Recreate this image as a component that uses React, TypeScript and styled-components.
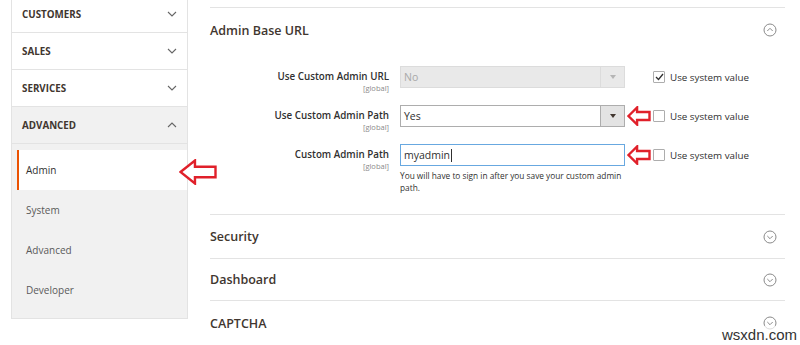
import React from "react";
import styled, { createGlobalStyle } from "styled-components";

const Global = createGlobalStyle`
  html, body { margin: 0; padding: 0; background: #fff; overflow: hidden; }
  body { font-family: "Open Sans", "Noto Sans", Arial, sans-serif; color: #303030; }
  * { box-sizing: border-box; }
`;

const Page = styled.div`
  position: relative;
  width: 800px;
  height: 345px;
  overflow: hidden;
  display: flex;
  align-items: flex-start;
  gap: 22px;
  padding-left: 11px;
`;

const Sidebar = styled.nav`
  position: relative;
  width: 177px;
  margin-top: -4px;
  border-left: 1px solid #e3e3e3;
  border-right: 1px solid #e3e3e3;
  border-bottom: 1px solid #e3e3e3;
  display: flex;
  flex-direction: column;
`;

const GroupHead = styled.div<{ $active?: boolean }>`
  height: 37px;
  display: flex;
  align-items: center;
  justify-content: space-between;
  padding: 0 10px 0 10px;
  border-bottom: 1px solid #e3e3e3;
  background: ${(p) => (p.$active ? "#f1f1f1" : "#fff")};
  font-size: 9.8px;
  font-weight: 700;
  color: #41362f;
`;

const SubList = styled.ul`
  list-style: none;
  margin: 0;
  padding: 6px 0 8px 0;
  background: #f1f1f1;
`;

const SubItem = styled.li<{ $active?: boolean }>`
  position: relative;
  height: 40px;
  display: flex;
  align-items: center;
  margin-left: 5px;
  padding-left: ${(p) => (p.$active ? "7px" : "9px")};
  font-size: 10px;
  color: ${(p) => (p.$active ? "#303030" : "#5a5a5a")};
  background: ${(p) => (p.$active ? "#fff" : "transparent")};
  border-left: ${(p) => (p.$active ? "2px solid #eb5202" : "none")};
`;

const Main = styled.main`
  width: 575px;
  margin-top: 7px;
  border-top: 1px solid #e3e3e3;
  display: flex;
  flex-direction: column;
`;

const SectionHead = styled.div<{ $h: number }>`
  height: ${(p) => p.$h}px;
  display: flex;
  align-items: center;
  justify-content: space-between;
  padding-right: 8px;
  font-size: 12.5px;
  font-weight: 600;
  color: #41362f;
`;

const Section = styled.section`
  border-bottom: 1px solid #e3e3e3;
`;

const Form = styled.div`
  display: flex;
  flex-direction: column;
  gap: 13px;
  padding: 14px 0 20px 0;
`;

const Row = styled.div`
  display: grid;
  grid-template-columns: 179px 225px 1fr;
  column-gap: 11px;
  align-items: start;
`;

const LabelCol = styled.div`
  display: flex;
  flex-direction: column;
  align-items: flex-end;
  padding-top: 4px;
`;

const Label = styled.div`
  font-size: 9.8px;
  font-weight: 600;
  color: #303030;
  line-height: 14px;
`;

const Scope = styled.div`
  font-size: 7.5px;
  color: #8a8a8a;
  line-height: 8px;
`;

const ControlCol = styled.div`
  position: relative;
  display: flex;
  flex-direction: column;
`;

const SelectBox = styled.div<{ $disabled?: boolean }>`
  height: 22px;
  display: flex;
  align-items: stretch;
  border: 1px solid ${(p) => (p.$disabled ? "#dcdcdc" : "#adadad")};
  background: ${(p) => (p.$disabled ? "#e9e9e9" : "#fff")};
  font-size: 10.5px;
  color: ${(p) => (p.$disabled ? "#a8a8a8" : "#303030")};
`;

const SelectValue = styled.div`
  flex: 1;
  display: flex;
  align-items: center;
  padding-left: 3px;
`;

const SelectButton = styled.div<{ $disabled?: boolean }>`
  width: 24px;
  display: flex;
  align-items: center;
  justify-content: center;
  border-left: 1px solid ${(p) => (p.$disabled ? "#dcdcdc" : "#adadad")};
  background: ${(p) => (p.$disabled ? "#e9e9e9" : "#e3e3e3")};
  &::after {
    content: "";
    border-left: 3px solid transparent;
    border-right: 3px solid transparent;
    border-top: 4px solid ${(p) => (p.$disabled ? "#b5b5b5" : "#41362f")};
  }
`;

const TextInput = styled.div`
  height: 22px;
  display: flex;
  align-items: center;
  padding-left: 3px;
  border: 1px solid #68a8e0;
  font-size: 10.5px;
  color: #303030;
`;

const Caret = styled.span`
  display: inline-block;
  width: 1px;
  height: 13px;
  background: #303030;
  margin-left: 1px;
`;

const Note = styled.div`
  margin-top: 4px;
  font-size: 8.3px;
  line-height: 12px;
  color: #303030;
`;

const CheckCol = styled.label`
  height: 22px;
  display: flex;
  align-items: center;
  gap: 5px;
  padding-left: 17px;
  font-size: 9.8px;
  color: #303030;
`;

const Box = styled.span`
  width: 12px;
  height: 12px;
  border: 1px solid #adadad;
  border-radius: 1px;
  background: #fff;
  display: flex;
  align-items: center;
  justify-content: center;
`;

const ArrowMark = styled.div<{ $w: number; $h: number }>`
  position: absolute;
  width: ${(p) => p.$w}px;
  height: ${(p) => p.$h}px;
`;

const FormArrow = styled(ArrowMark)`
  right: -26px;
  top: 1px;
`;

const SideArrow = styled(ArrowMark)`
  left: 160px;
  top: 9px;
`;

const Watermark = styled.div`
  position: absolute;
  right: 3px;
  bottom: 2px;
  font-family: "Liberation Sans", Arial, sans-serif;
  font-size: 15px;
  color: #333;
  background: rgba(255, 255, 255, 0.7);
`;

const Arrow = ({ w, h }: { w: number; h: number }) => (
  <svg width={w} height={h} viewBox={`0 0 ${w} ${h}`}>
    <polygon
      points={`1.5,${h / 2} ${w * 0.42},1.5 ${w * 0.42},${h * 0.3} ${w - 1.5},${h * 0.3} ${w - 1.5},${h * 0.7} ${w * 0.42},${h * 0.7} ${w * 0.42},${h - 1.5}`}
      fill="#fff"
      stroke="#e0202a"
      strokeWidth={2.4}
      strokeLinejoin="miter"
    />
  </svg>
);

const Chevron = ({ up }: { up?: boolean }) => (
  <svg width="10" height="6" viewBox="0 0 10 6">
    <polyline
      points={up ? "1,5 5,1 9,5" : "1,1 5,5 9,1"}
      fill="none"
      stroke="#666"
      strokeWidth="1.1"
    />
  </svg>
);

const CircleToggle = ({ up }: { up?: boolean }) => (
  <svg width="14" height="14" viewBox="0 0 14 14">
    <circle cx="7" cy="7" r="6" fill="none" stroke="#8a8a8a" strokeWidth="1" />
    <polyline
      points={up ? "4.3,8 7,5.3 9.7,8" : "4.3,6 7,8.7 9.7,6"}
      fill="none"
      stroke="#8a8a8a"
      strokeWidth="1"
    />
  </svg>
);

const Check = () => (
  <svg width="9" height="8" viewBox="0 0 9 8">
    <polyline points="1,4 3.5,6.5 8,1" fill="none" stroke="#303030" strokeWidth="1.3" />
  </svg>
);

const groups = ["CUSTOMERS", "SALES", "SERVICES"];
const subItems = ["Admin", "System", "Advanced", "Developer"];
const collapsed: { title: string; h: number }[] = [
  { title: "Security", h: 43 },
  { title: "Dashboard", h: 41 },
  { title: "CAPTCHA", h: 44 },
];

export default function App() {
  return (
    <>
      <Global />
      <Page>
        <Sidebar>
          {groups.map((g) => (
            <GroupHead key={g}>
              {g}
              <Chevron />
            </GroupHead>
          ))}
          <GroupHead $active>
            ADVANCED
            <Chevron up />
          </GroupHead>
          <SubList>
            {subItems.map((s, i) => (
              <SubItem key={s} $active={i === 0}>
                {s}
                {i === 0 && (
                  <SideArrow $w={38} $h={26}>
                    <Arrow w={38} h={26} />
                  </SideArrow>
                )}
              </SubItem>
            ))}
          </SubList>
        </Sidebar>

        <Main>
          <Section>
            <SectionHead $h={44}>
              Admin Base URL
              <CircleToggle up />
            </SectionHead>
            <Form>
              <Row>
                <LabelCol>
                  <Label>Use Custom Admin URL</Label>
                  <Scope>[global]</Scope>
                </LabelCol>
                <ControlCol>
                  <SelectBox $disabled>
                    <SelectValue>No</SelectValue>
                    <SelectButton $disabled />
                  </SelectBox>
                </ControlCol>
                <CheckCol>
                  <Box>
                    <Check />
                  </Box>
                  Use system value
                </CheckCol>
              </Row>
              <Row>
                <LabelCol>
                  <Label>Use Custom Admin Path</Label>
                  <Scope>[global]</Scope>
                </LabelCol>
                <ControlCol>
                  <SelectBox>
                    <SelectValue>Yes</SelectValue>
                    <SelectButton />
                  </SelectBox>
                  <FormArrow $w={24} $h={20}>
                    <Arrow w={24} h={20} />
                  </FormArrow>
                </ControlCol>
                <CheckCol>
                  <Box />
                  Use system value
                </CheckCol>
              </Row>
              <Row>
                <LabelCol>
                  <Label>Custom Admin Path</Label>
                  <Scope>[global]</Scope>
                </LabelCol>
                <ControlCol>
                  <TextInput>
                    myadmin
                    <Caret />
                  </TextInput>
                  <FormArrow $w={24} $h={20}>
                    <Arrow w={24} h={20} />
                  </FormArrow>
                  <Note>
                    You will have to sign in after you save your custom admin path.
                  </Note>
                </ControlCol>
                <CheckCol>
                  <Box />
                  Use system value
                </CheckCol>
              </Row>
            </Form>
          </Section>
          {collapsed.map((c) => (
            <Section key={c.title}>
              <SectionHead $h={c.h}>
                {c.title}
                <CircleToggle />
              </SectionHead>
            </Section>
          ))}
        </Main>
        <Watermark>wsxdn.com</Watermark>
      </Page>
    </>
  );
}
